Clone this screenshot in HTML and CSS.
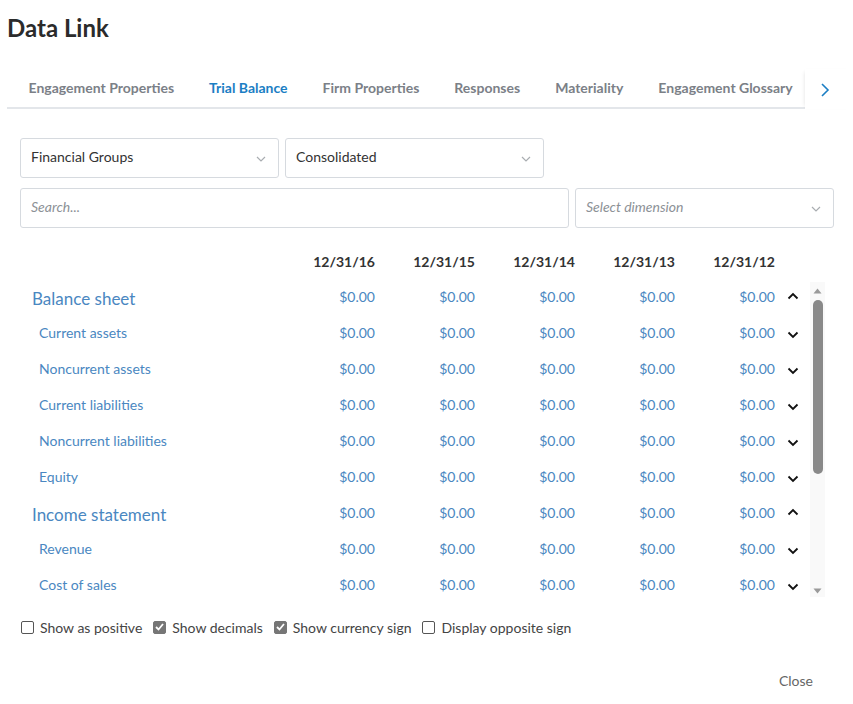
FILE: index.html
```html
<!DOCTYPE html>
<html>
<head>
<meta charset="utf-8">
<link rel="stylesheet" href="styles.css">
</head>
<body>
<div class="dialog">
  <h1 class="title">Data Link</h1>

  <div class="tabbar">
    <div class="tabs">
      <div class="tab">Engagement Properties</div>
      <div class="tab active">Trial Balance</div>
      <div class="tab">Firm Properties</div>
      <div class="tab">Responses</div>
      <div class="tab">Materiality</div>
      <div class="tab">Engagement Glossary</div>
    </div>
    <div class="tab-next">
      <svg width="10" height="16" viewBox="0 0 10 16"><path d="M2 2 L8 8 L2 14" fill="none" stroke="#1b7ec4" stroke-width="1.6"/></svg>
    </div>
  </div>

  <div class="filters">
    <div class="row">
      <div class="select w259"><span>Financial Groups</span><svg class="dd" width="10" height="6" viewBox="0 0 10 6"><path d="M1 1 L5 5 L9 1" fill="none" stroke="#a9adb1" stroke-width="1.2"/></svg></div>
      <div class="select w259"><span>Consolidated</span><svg class="dd" width="10" height="6" viewBox="0 0 10 6"><path d="M1 1 L5 5 L9 1" fill="none" stroke="#a9adb1" stroke-width="1.2"/></svg></div>
    </div>
    <div class="row">
      <div class="select search"><span class="ph">Search...</span></div>
      <div class="select w259"><span class="ph">Select dimension</span><svg class="dd" width="10" height="6" viewBox="0 0 10 6"><path d="M1 1 L5 5 L9 1" fill="none" stroke="#a9adb1" stroke-width="1.2"/></svg></div>
    </div>
  </div>

  <div class="table">
    <div class="thead">
      <div class="lbl"></div>
      <div class="val">12/31/16</div>
      <div class="val">12/31/15</div>
      <div class="val">12/31/14</div>
      <div class="val">12/31/13</div>
      <div class="val">12/31/12</div>
      <div class="chev"></div>
    </div>
    <div class="body">
      <div class="rows">
        <div class="tr group"><div class="lbl">Balance sheet</div><div class="val">$0.00</div><div class="val">$0.00</div><div class="val">$0.00</div><div class="val">$0.00</div><div class="val">$0.00</div><div class="chev"><svg width="12" height="8" viewBox="0 0 12 8"><path d="M1.5 6.5 L6 2 L10.5 6.5" fill="none" stroke="#111" stroke-width="1.8"/></svg></div></div>
        <div class="tr"><div class="lbl">Current assets</div><div class="val">$0.00</div><div class="val">$0.00</div><div class="val">$0.00</div><div class="val">$0.00</div><div class="val">$0.00</div><div class="chev"><svg width="12" height="8" viewBox="0 0 12 8"><path d="M1.5 1.5 L6 6 L10.5 1.5" fill="none" stroke="#111" stroke-width="1.8"/></svg></div></div>
        <div class="tr"><div class="lbl">Noncurrent assets</div><div class="val">$0.00</div><div class="val">$0.00</div><div class="val">$0.00</div><div class="val">$0.00</div><div class="val">$0.00</div><div class="chev"><svg width="12" height="8" viewBox="0 0 12 8"><path d="M1.5 1.5 L6 6 L10.5 1.5" fill="none" stroke="#111" stroke-width="1.8"/></svg></div></div>
        <div class="tr"><div class="lbl">Current liabilities</div><div class="val">$0.00</div><div class="val">$0.00</div><div class="val">$0.00</div><div class="val">$0.00</div><div class="val">$0.00</div><div class="chev"><svg width="12" height="8" viewBox="0 0 12 8"><path d="M1.5 1.5 L6 6 L10.5 1.5" fill="none" stroke="#111" stroke-width="1.8"/></svg></div></div>
        <div class="tr"><div class="lbl">Noncurrent liabilities</div><div class="val">$0.00</div><div class="val">$0.00</div><div class="val">$0.00</div><div class="val">$0.00</div><div class="val">$0.00</div><div class="chev"><svg width="12" height="8" viewBox="0 0 12 8"><path d="M1.5 1.5 L6 6 L10.5 1.5" fill="none" stroke="#111" stroke-width="1.8"/></svg></div></div>
        <div class="tr"><div class="lbl">Equity</div><div class="val">$0.00</div><div class="val">$0.00</div><div class="val">$0.00</div><div class="val">$0.00</div><div class="val">$0.00</div><div class="chev"><svg width="12" height="8" viewBox="0 0 12 8"><path d="M1.5 1.5 L6 6 L10.5 1.5" fill="none" stroke="#111" stroke-width="1.8"/></svg></div></div>
        <div class="tr group"><div class="lbl">Income statement</div><div class="val">$0.00</div><div class="val">$0.00</div><div class="val">$0.00</div><div class="val">$0.00</div><div class="val">$0.00</div><div class="chev"><svg width="12" height="8" viewBox="0 0 12 8"><path d="M1.5 6.5 L6 2 L10.5 6.5" fill="none" stroke="#111" stroke-width="1.8"/></svg></div></div>
        <div class="tr"><div class="lbl">Revenue</div><div class="val">$0.00</div><div class="val">$0.00</div><div class="val">$0.00</div><div class="val">$0.00</div><div class="val">$0.00</div><div class="chev"><svg width="12" height="8" viewBox="0 0 12 8"><path d="M1.5 1.5 L6 6 L10.5 1.5" fill="none" stroke="#111" stroke-width="1.8"/></svg></div></div>
        <div class="tr"><div class="lbl">Cost of sales</div><div class="val">$0.00</div><div class="val">$0.00</div><div class="val">$0.00</div><div class="val">$0.00</div><div class="val">$0.00</div><div class="chev"><svg width="12" height="8" viewBox="0 0 12 8"><path d="M1.5 1.5 L6 6 L10.5 1.5" fill="none" stroke="#111" stroke-width="1.8"/></svg></div></div>
      </div>
      <div class="scrollbar">
        <svg class="arrow" width="9" height="6" viewBox="0 0 9 6"><path d="M0.5 5.5 L4.5 0.5 L8.5 5.5 Z" fill="#9a9a9a"/></svg>
        <div class="track"><div class="thumb"></div></div>
        <svg class="arrow" width="9" height="6" viewBox="0 0 9 6"><path d="M0.5 0.5 L4.5 5.5 L8.5 0.5 Z" fill="#9a9a9a"/></svg>
      </div>
    </div>
  </div>

  <div class="options">
    <label class="opt"><span class="cb"></span>Show as positive</label>
    <label class="opt"><span class="cb on"><svg width="9" height="8" viewBox="0 0 9 8"><path d="M1 4 L3.5 6.5 L8 1" fill="none" stroke="#fff" stroke-width="1.8"/></svg></span>Show decimals</label>
    <label class="opt"><span class="cb on"><svg width="9" height="8" viewBox="0 0 9 8"><path d="M1 4 L3.5 6.5 L8 1" fill="none" stroke="#fff" stroke-width="1.8"/></svg></span>Show currency sign</label>
    <label class="opt"><span class="cb"></span>Display opposite sign</label>
  </div>

  <div class="footer">
    <span class="close">Close</span>
  </div>
</div>
</body>
</html>
```

FILE: styles.css
```css
* { box-sizing: border-box; }
html, body { margin: 0; padding: 0; background: #fff; }
body {
  font-family: Lato, "Open Sans", "Liberation Sans", sans-serif;
  color: #333;
  width: 853px;
  height: 704px;
  overflow: hidden;
}
.dialog { padding: 0; }

.title {
  margin: 13px 0 0 7px;
  font-size: 24px;
  line-height: 30px;
  font-weight: 700;
  color: #2b2b2b;
}

.tabbar {
  display: flex;
  margin-top: 26px;
  height: 40px;
}
.tabs {
  display: flex;
  width: 798px;
  margin-left: 7px;
  padding-left: 4px;
  border-bottom: 2px solid #e3e6ea;
  overflow: hidden;
  white-space: nowrap;
}
.tab {
  flex: none;
  padding: 0 17.5px;
  height: 40px;
  line-height: 38px;
  font-size: 14px;
  font-weight: 700;
  color: #7b8087;
}
.tab.active {
  color: #1b7ec4;
  border-bottom: 2px solid #1b7ec4;
  margin-bottom: -2px;
}
.tab-next {
  flex: none;
  width: 48px;
  display: flex;
  align-items: center;
  justify-content: flex-start;
  padding-left: 15px;
  padding-top: 2px;
  box-shadow: -3px 0 4px -3px rgba(0,0,0,0.12);
}

.filters {
  padding: 29px 19px 0 20px;
  display: flex;
  flex-direction: column;
  gap: 10px;
}
.row { display: flex; gap: 6px; }
.select {
  height: 40px;
  border: 1px solid #d6dadf;
  border-radius: 3px;
  display: flex;
  align-items: center;
  justify-content: space-between;
  padding: 0 12px 3px 10px;
  font-size: 14px;
  color: #333;
}
.w259 { width: 259px; }
.search { width: 549px; }
.ph { font-style: italic; color: #8c9196; }
.dd { margin-top: 4px; }

.table { margin-top: 15px; padding-left: 20px; }
.thead, .tr {
  display: flex;
  align-items: center;
}
.thead { height: 35px; font-weight: 700; font-size: 14px; color: #333; padding-top: 2px; }
.lbl { width: 255px; flex: none; }
.val { width: 100px; flex: none; text-align: right; font-size: 14px; }
.chev { width: 35px; flex: none; display: flex; justify-content: center; padding-top: 6px; }

.body { display: flex; height: 324px; }
.rows { flex: none; }
.tr { height: 36px; color: #4a87c1; }
.tr .val { color: #4a87c1; }
.tr .lbl { padding-left: 19px; font-size: 14px; }
.tr.group .lbl { padding-left: 12px; font-size: 17px; padding-top: 5px; }
.tr.group .chev { padding-top: 0; }

.scrollbar {
  width: 15px;
  margin-top: 4px;
  height: 315px;
  background: #f9f9f9;
  display: flex;
  flex-direction: column;
  align-items: center;
  padding: 6px 0 3px;
}
.arrow { flex: none; }
.track { flex: 1; width: 100%; display: flex; justify-content: center; padding-top: 6px; }
.thumb { width: 10px; height: 174px; border-radius: 5px; background: #898989; }

.options {
  display: flex;
  align-items: center;
  padding-left: 21px;
  margin-top: 15px;
  height: 20px;
  font-size: 14px;
  color: #444;
}
.opt { display: flex; align-items: center; margin-right: 11px; }
.cb {
  width: 13px; height: 13px;
  border: 1px solid #555;
  border-radius: 2px;
  margin-right: 6px;
  display: inline-flex;
  align-items: center;
  justify-content: center;
  background: #fff;
}
.cb.on { background: #767676; border-color: #767676; }

.footer {
  display: flex;
  justify-content: flex-end;
  padding-right: 40px;
  margin-top: 35px;
}
.close { font-size: 14px; color: #666; }
```
